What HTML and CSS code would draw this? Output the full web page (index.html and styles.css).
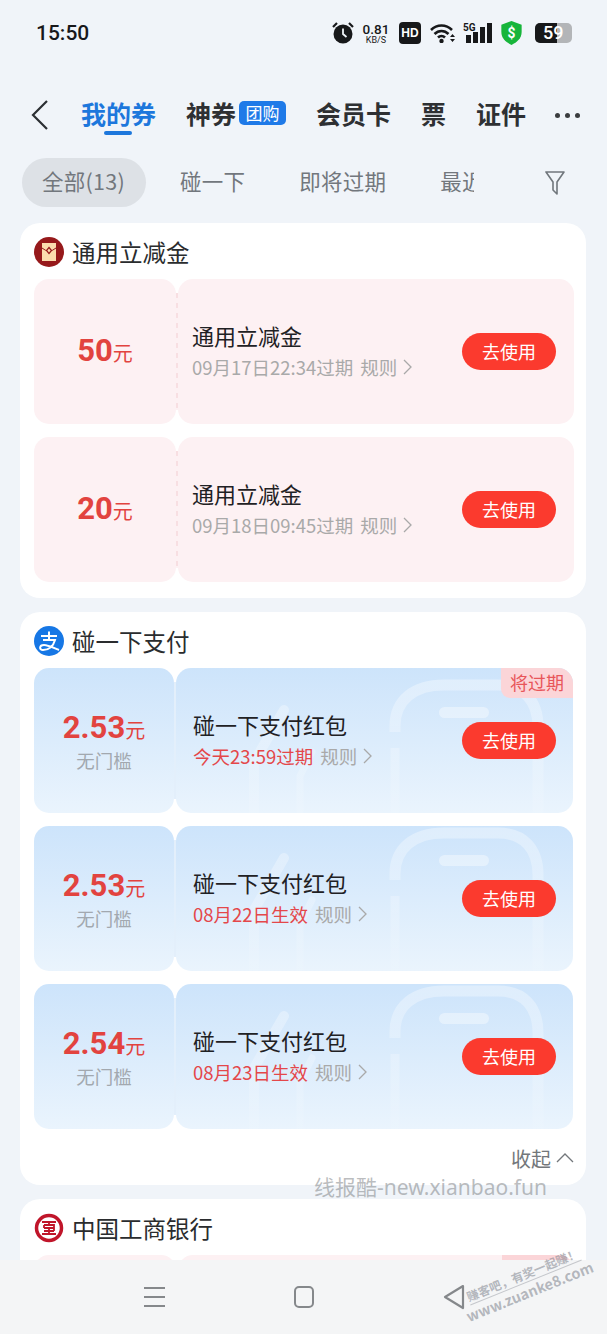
FILE: index.html
```html
<!DOCTYPE html>
<html lang="zh-CN">
<head>
    <meta charset="UTF-8">
    <meta name="viewport" content="width=device-width, initial-scale=1.0">
    <title>我的券</title>
    <link rel="stylesheet" href="styles.css">
</head>
<body>
<svg class="defs" width="0" height="0">
    <defs>
        <linearGradient id="fade" gradientUnits="userSpaceOnUse" x1="0" y1="0" x2="0" y2="145">
            <stop offset="0" stop-color="#fff" stop-opacity=".36"/>
            <stop offset=".55" stop-color="#fff" stop-opacity=".22"/>
            <stop offset="1" stop-color="#fff" stop-opacity=".06"/>
        </linearGradient>
        <symbol id="decor-art" viewBox="0 0 397 160">
            <path d="M219 54V48C219 22 238 7 268 7h54c26 0 40 16 40 42v96" stroke="url(#fade)" stroke-width="11" fill="none"/>
            <path d="M219 70v90" stroke="url(#fade)" stroke-width="9" fill="none"/>
            <rect x="263" y="29" width="50" height="11" rx="5.500" fill="#fff" fill-opacity=".38"/>
            <path d="M108 32L78 84v76" stroke="url(#fade)" stroke-width="10" stroke-linecap="round" fill="none"/>
            <path d="M136 74l-12 24v62" stroke="url(#fade)" stroke-width="7" stroke-linecap="round" fill="none"/>
        </symbol>
        <symbol id="chev" viewBox="0 0 9 16">
            <path d="M1 1l7 7-7 7" stroke="#a9a9a9" stroke-width="1.300" fill="none"/>
        </symbol>
    </defs>
</svg>
<div class="page">
    <div class="status">
        <span class="time">15:50</span>
        <div class="status-icons">
            <svg class="ic-alarm" width="22" height="24" viewBox="0 0 22 24"><path d="M1 6l4-4M21 6l-4-4" stroke="#17181a" stroke-width="2.200" fill="none"/><circle cx="11" cy="13" r="9.500" fill="#17181a"/><path d="M11 7.500V13l3.500 3" stroke="#f0f4f9" stroke-width="1.800" fill="none"/></svg>
            <div class="speed"><span class="speed-num">0.81</span><span class="speed-unit">KB/S</span></div>
            <span class="hd">HD</span>
            <svg class="ic-wifi" width="26" height="20" viewBox="0 0 26 20"><path d="M1 7c6-6 15-6 21 0M4.500 11c4-4 10-4 14 0M8 14.500c2-2 5-2 7 0" stroke="#17181a" stroke-width="2.600" fill="none"/><circle cx="11.500" cy="18" r="2.200" fill="#17181a"/><path d="M20 14l2.500-3 2.500 3zM20 16l2.500 3 2.500-3z" fill="#17181a"/></svg>
            <div class="signal">
                <span class="five-g">5G</span>
                <svg width="29" height="20" viewBox="0 0 29 20"><rect x="3" y="12" width="5" height="8" fill="#17181a"/><rect x="10" y="9" width="5" height="11" fill="#17181a"/><rect x="17" y="4" width="5" height="16" fill="#17181a"/><rect x="24" y="0" width="5" height="20" fill="#17181a"/></svg>
            </div>
            <svg class="ic-shield" width="23" height="24" viewBox="0 0 23 26"><path d="M11.500 0l11 4v8c0 7-5 11-11 14C5.500 23 .5 19 .5 12V4z" fill="#17b53b"/><text x="11.500" y="18" text-anchor="middle" class="shield-mark">$</text></svg>
            <div class="battery"><span class="battery-fill"></span><span class="battery-num">59</span></div>
        </div>
    </div>

    <div class="nav">
        <svg class="back" width="18" height="32" viewBox="0 0 18 32"><path d="M16 2L2 16l14 14" stroke="#2b2f33" stroke-width="2.200" fill="none"/></svg>
        <div class="tabs">
            <span class="tab tab-active">我的券</span>
            <span class="tab tab-badged">神券<em class="badge">团购</em></span>
            <span class="tab">会员卡</span>
            <span class="tab">票</span>
            <span class="tab">证件</span>
        </div>
        <div class="more"><i></i><i></i><i></i></div>
    </div>

    <div class="filters">
        <div class="filter-scroll">
            <span class="filter filter-active">全部(13)</span>
            <span class="filter">碰一下</span>
            <span class="filter">即将过期</span>
            <span class="filter">最近</span>
        </div>
        <svg class="funnel" width="20" height="24" viewBox="0 0 20 24"><path d="M1 1h18l-7 10v12l-4-4v-8z" stroke="#70767c" stroke-width="1.600" fill="none" stroke-linejoin="round"/></svg>
    </div>

    <section class="card">
        <div class="card-head">
            <svg width="30" height="30" viewBox="0 0 30 30"><circle cx="15" cy="15" r="15" fill="#96191b"/><rect x="8" y="6" width="14" height="18" fill="#fbdcae"/><path d="M8 11q7 6 14 0" stroke="#96191b" stroke-width="1" fill="none"/><path d="M15 10.500l2.500 3-2.500 3-2.500-3z" fill="#fbdcae" stroke="#96191b" stroke-width="1.200"/></svg>
            <h2>通用立减金</h2>
        </div>
        <div class="coupon coupon-red">
            <div class="amount"><div class="price"><b>50</b>元</div></div>
            <div class="detail">
                <div class="info">
                    <div class="name">通用立减金</div>
                    <div class="meta">09月17日22:34过期<span class="rule">规则<svg class="chev" width="9" height="16"><use href="#chev"/></svg></span></div>
                </div>
                <span class="use">去使用</span>
            </div>
        </div>
        <div class="coupon coupon-red">
            <div class="amount"><div class="price"><b>20</b>元</div></div>
            <div class="detail">
                <div class="info">
                    <div class="name">通用立减金</div>
                    <div class="meta">09月18日09:45过期<span class="rule">规则<svg class="chev" width="9" height="16"><use href="#chev"/></svg></span></div>
                </div>
                <span class="use">去使用</span>
            </div>
        </div>
    </section>

    <section class="card card-blue">
        <div class="card-head">
            <svg width="30" height="30" viewBox="0 0 30 30"><circle cx="15" cy="15" r="15" fill="#1677e5"/><path d="M7 10h16M15 5.500V14M9 14h12c-2 7-7 10-12 10-4 0-4-5 1-5 4 0 10 3 15 5" stroke="#fff" stroke-width="2" fill="none"/></svg>
            <h2>碰一下支付</h2>
        </div>
        <div class="coupon coupon-blue">
            <div class="amount"><div class="price"><b>2.53</b>元</div><div class="limit">无门槛</div></div>
            <div class="detail">
                <svg class="decor decor-low" width="397" height="160"><use href="#decor-art"/></svg>
                <div class="info">
                    <div class="name">碰一下支付红包</div>
                    <div class="meta"><span class="warn">今天23:59过期</span><span class="rule">规则<svg class="chev" width="9" height="16"><use href="#chev"/></svg></span></div>
                </div>
                <span class="use">去使用</span>
                <span class="tag">将过期</span>
            </div>
        </div>
        <div class="coupon coupon-blue">
            <div class="amount"><div class="price"><b>2.53</b>元</div><div class="limit">无门槛</div></div>
            <div class="detail">
                <svg class="decor" width="397" height="160"><use href="#decor-art"/></svg>
                <div class="info">
                    <div class="name">碰一下支付红包</div>
                    <div class="meta"><span class="warn">08月22日生效</span><span class="rule">规则<svg class="chev" width="9" height="16"><use href="#chev"/></svg></span></div>
                </div>
                <span class="use">去使用</span>
            </div>
        </div>
        <div class="coupon coupon-blue">
            <div class="amount"><div class="price"><b>2.54</b>元</div><div class="limit">无门槛</div></div>
            <div class="detail">
                <svg class="decor" width="397" height="160"><use href="#decor-art"/></svg>
                <div class="info">
                    <div class="name">碰一下支付红包</div>
                    <div class="meta"><span class="warn">08月23日生效</span><span class="rule">规则<svg class="chev" width="9" height="16"><use href="#chev"/></svg></span></div>
                </div>
                <span class="use">去使用</span>
            </div>
        </div>
        <div class="fold">收起<svg width="18" height="10" viewBox="0 0 18 10"><path d="M1 9l8-8 8 8" stroke="#73777b" stroke-width="1.300" fill="none"/></svg></div>
    </section>

    <section class="card">
        <div class="card-head">
            <svg width="30" height="30" viewBox="0 0 30 30"><circle cx="15" cy="15" r="12.500" fill="none" stroke="#c0152a" stroke-width="3.500"/><path d="M8 9h14M15 9v3M10 12h10v3h-10M15 15v3M10 18h10M8 21h14M15 18v3M10 12v3M20 15v3" stroke="#c0152a" stroke-width="1.800" fill="none"/></svg>
            <h2>中国工商银行</h2>
        </div>
        <div class="coupon coupon-red">
            <div class="amount"></div>
            <div class="detail"><span class="tag tag-flat"></span></div>
        </div>
    </section>

    <div class="mark-site">线报酷-new.xianbao.fun</div>

    <div class="bottom-bar">
        <div class="menu-ic"><i></i><i></i><i></i></div>
        <div class="home-ic"></div>
        <svg class="back-ic" width="22" height="26" viewBox="0 0 22 26"><path d="M20 2L2 13l18 11z" stroke="#85888b" stroke-width="2.200" fill="none" stroke-linejoin="round"/></svg>
    </div>
    <div class="mark-forum"><span class="mark-line">赚客吧，有奖一起赚！</span><span>www.zuanke8.com</span></div>
</div>
</body>
</html>
```

FILE: styles.css
```css
* {
    box-sizing: border-box;
}

body {
    margin: 0;
    background: #f0f4f9;
    font-family: "Noto Sans CJK SC", "Noto Sans", sans-serif;
    color: #2a2c2e;
}

.defs {
    display: block;
}

.page {
    position: relative;
    width: 607px;
    height: 1334px;
    overflow: hidden;
    background: #f0f4f9;
}

/* status bar */
.status {
    height: 66px;
    padding: 0 35px 0 36px;
    display: flex;
    align-items: center;
    justify-content: space-between;
}

.time {
    font-family: Roboto, sans-serif;
    font-size: 21px;
    font-weight: 500;
    color: #17181a;
}

.status-icons {
    display: flex;
    align-items: center;
}

.speed {
    width: 28px;
    margin-left: 8px;
    display: flex;
    flex-direction: column;
    align-items: center;
    font-family: Roboto, sans-serif;
    color: #17181a;
}

.speed-num {
    font-size: 13.500px;
    font-weight: 500;
    line-height: 14px;
}

.speed-unit {
    font-size: 9px;
    line-height: 9px;
}

.hd {
    width: 22px;
    height: 22px;
    margin-left: 9px;
    border-radius: 4px;
    background: #17181a;
    color: #fff;
    font-family: "Liberation Sans", sans-serif;
    font-size: 12px;
    font-weight: 700;
    line-height: 22px;
    text-align: center;
}

.ic-wifi {
    margin-left: 9px;
}

.signal {
    position: relative;
    margin-left: 7px;
    height: 20px;
    display: flex;
    align-items: flex-end;
}

.five-g {
    position: absolute;
    left: 0;
    top: 0;
    font-family: Roboto, sans-serif;
    font-size: 10px;
    font-weight: 700;
    line-height: 10px;
    color: #17181a;
}

.ic-shield {
    margin-left: 8px;
}

.shield-mark {
    font-family: Roboto, sans-serif;
    font-size: 15px;
    font-weight: 700;
    fill: #fff;
}

.battery {
    position: relative;
    width: 37px;
    height: 20px;
    margin-left: 12px;
    border-radius: 5px;
    background: #b3b5b8;
    overflow: hidden;
}

.battery-fill {
    position: absolute;
    left: 0;
    top: 0;
    bottom: 0;
    width: 22px;
    background: #17181a;
}

.battery-num {
    position: absolute;
    left: 8px;
    top: 0;
    font-family: Roboto, sans-serif;
    font-size: 18px;
    font-weight: 500;
    line-height: 20px;
    color: #fff;
}

/* top tabs */
.nav {
    height: 50px;
    margin-top: 24px;
    padding: 0 27px 0 31px;
    display: flex;
    align-items: center;
}

.tabs {
    margin-left: 32px;
    display: flex;
    gap: 30px;
    flex: 1;
}

.tab {
    position: relative;
    height: 50px;
    padding-bottom: 4px;
    font-size: 25px;
    font-weight: 700;
    color: #2e3033;
    display: flex;
    align-items: center;
}

.tab-active {
    color: #1d77dc;
}

.tab-active::after {
    content: "";
    position: absolute;
    left: 23px;
    bottom: 5px;
    width: 28px;
    height: 4px;
    border-radius: 2px;
    background: #1d77dc;
}

.badge {
    width: 47px;
    height: 24px;
    margin-left: 3px;
    border-radius: 5px;
    background: #1f7ae8;
    color: #fff;
    font-size: 17px;
    font-style: normal;
    font-weight: 400;
    line-height: 24px;
    text-align: center;
}

.more {
    display: flex;
    gap: 5px;
}

.more i {
    width: 5px;
    height: 5px;
    border-radius: 50%;
    background: #3a3c3f;
}

/* filter row */
.filters {
    height: 49px;
    margin-top: 18px;
    padding: 0 42px 0 22px;
    display: flex;
    align-items: center;
    justify-content: space-between;
}

.filter-scroll {
    width: 452px;
    display: flex;
    gap: 14px;
    overflow: hidden;
}

.filter {
    flex: none;
    height: 49px;
    padding: 0 20px;
    border-radius: 25px;
    font-size: 21.500px;
    letter-spacing: 0.25px;
    line-height: 45px;
    color: #72777d;
}

.filter-active {
    padding-right: 21px;
    background: #dde1e6;
}

/* cards */
.card {
    margin: 14px 21px 0 20px;
    padding: 0 12px 16px 14px;
    border-radius: 20px;
    background: #fff;
}

.filters + .card {
    margin-top: 16px;
}

.card-blue {
    padding-bottom: 0;
    padding-right: 13px;
}

.card-head {
    height: 56px;
    padding-top: 2px;
    display: flex;
    align-items: center;
    gap: 8px;
}

.card-head h2 {
    margin: 0;
    font-size: 23.500px;
    font-weight: 400;
    color: #2a2c2e;
}

.coupon {
    position: relative;
    display: flex;
    gap: 2px;
    height: 145px;
    margin-bottom: 13px;
}

.coupon:last-child {
    margin-bottom: 0;
}

/* dashed seam between the stub and the body */
.coupon::after {
    content: "";
    position: absolute;
    left: 142px;
    top: 14px;
    bottom: 14px;
    width: 2px;
    background: repeating-linear-gradient(180deg, #f8dfe2 0 5px, #fdf1f3 5px 10px);
}

.coupon-blue::after {
    left: 140px;
    background: #e3effb;
}

.amount {
    flex: none;
    width: 142px;
    border-radius: 15px;
    display: flex;
    flex-direction: column;
    align-items: center;
    justify-content: center;
}

.coupon-blue .amount {
    width: 140px;
}

.detail {
    position: relative;
    flex: 1;
    padding: 0 18px 0 14px;
    border-radius: 15px;
    display: flex;
    align-items: center;
    justify-content: space-between;
    overflow: hidden;
}

.coupon-blue .detail {
    padding: 0 17px 0 17px;
}

.coupon-red .amount,
.coupon-red .detail {
    background: #fdf1f3;
}

.coupon-blue .amount,
.coupon-blue .detail {
    background: linear-gradient(180deg, #cde4fb, #eaf4fd);
}

.decor {
    position: absolute;
    left: 0;
    top: 0;
}

.decor-low {
    top: 10px;
}

.price {
    font-size: 20px;
    color: #e2433f;
    line-height: 36px;
}

.price b {
    font-family: Roboto, sans-serif;
    font-size: 31px;
    font-weight: 700;
}

.limit {
    font-size: 18.500px;
    line-height: 24px;
    color: #a2a8af;
}

.info {
    position: relative;
    padding-bottom: 2px;
}

.name {
    margin-bottom: 2px;
    font-size: 22px;
    line-height: 30px;
    color: #1f2124;
}

.meta {
    display: flex;
    align-items: center;
    font-size: 18.500px;
    line-height: 30px;
    color: #a9a9a9;
}

.warn {
    color: #e4474a;
}

.rule {
    margin-left: 7px;
    display: flex;
    align-items: center;
    gap: 6px;
}

.use {
    position: relative;
    width: 94px;
    height: 37px;
    border-radius: 19px;
    background: #fb3a2e;
    color: #fff;
    font-size: 18px;
    line-height: 36px;
    text-align: center;
}

.tag {
    position: absolute;
    right: 0;
    top: 0;
    width: 72px;
    height: 30px;
    border-bottom-left-radius: 9px;
    background: #fbd5d8;
    color: #e8565a;
    font-size: 18px;
    line-height: 29px;
    text-align: center;
}

.fold {
    height: 56px;
    margin: -13px -1px 0 0;
    padding-top: 2px;
    display: flex;
    align-items: center;
    justify-content: flex-end;
    gap: 5px;
    font-size: 20px;
    color: #73777b;
}

/* watermarks and bottom bar */
.mark-site {
    position: absolute;
    left: 314px;
    top: 1172px;
    font-family: "Noto Sans", "Noto Sans CJK SC", sans-serif;
    font-size: 21px;
    line-height: 30px;
    color: rgba(120, 124, 128, 0.5);
    white-space: nowrap;
}

.bottom-bar {
    position: absolute;
    left: 0;
    right: 0;
    bottom: 0;
    height: 74px;
    padding: 0 142px 0 144px;
    background: #f4f5f6;
    display: flex;
    align-items: center;
    justify-content: space-between;
}

.menu-ic {
    width: 21px;
    display: flex;
    flex-direction: column;
    gap: 7px;
}

.menu-ic i {
    height: 2px;
    background: #85888b;
}

.home-ic {
    width: 20px;
    height: 22px;
    border: 2.500px solid #85888b;
    border-radius: 5px;
}

.mark-forum {
    position: absolute;
    left: 466px;
    top: 1265px;
    width: 120px;
    display: flex;
    flex-direction: column;
    align-items: center;
    transform: rotate(-22deg);
    font-size: 14.500px;
    line-height: 17px;
    font-weight: 700;
    color: rgba(125, 130, 140, 0.55);
    white-space: nowrap;
}

.mark-line {
    width: 120px;
    border-bottom: 1px solid rgba(125, 130, 140, 0.4);
    font-size: 12px;
    text-align: center;
}
```
